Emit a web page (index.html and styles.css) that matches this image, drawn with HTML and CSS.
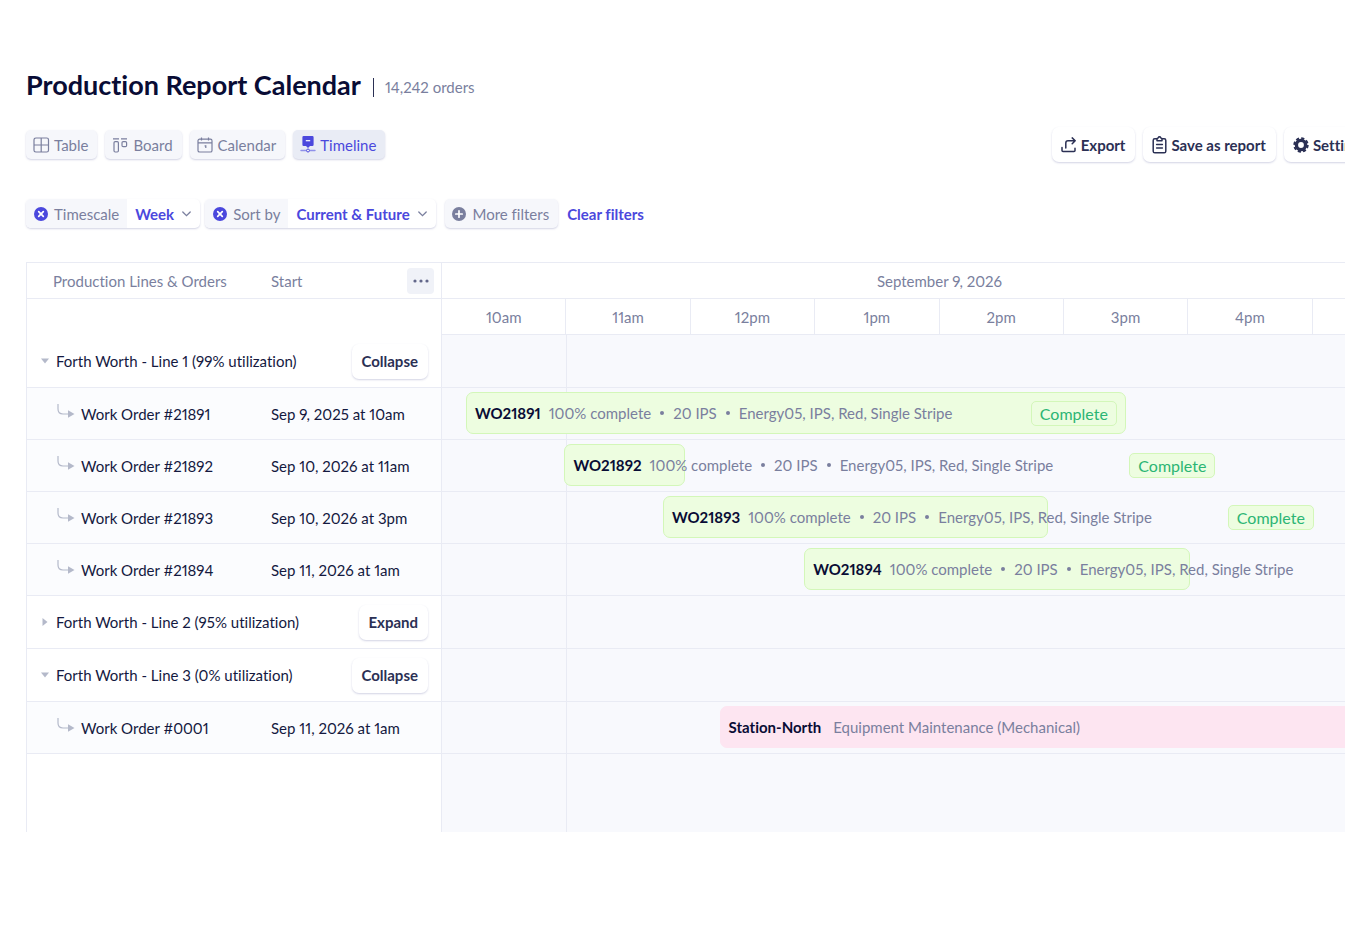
FILE: index.html
```html
<!DOCTYPE html>
<html lang="en">
<head>
  <meta charset="UTF-8">
  <meta name="viewport" content="width=device-width, initial-scale=1.0">
  <title>Production Report Calendar</title>
  <link rel="stylesheet" href="styles.css">
</head>
<body>
  <main class="page">
    <header class="page-header">
      <h1>Production Report Calendar</h1>
      <span class="divider"></span>
      <span class="count">14,242 orders</span>
    </header>

    <div class="toolbar">
      <nav class="views">
        <button class="chip">
          <svg width="17" height="16" viewBox="0 0 17 16" fill="none" stroke="currentColor" stroke-width="1.2"><rect x="1" y="1" width="14.5" height="14" rx="1.8"/><path d="M8.2 1v14M1 8h14.5"/></svg>
          Table
        </button>
        <button class="chip">
          <svg width="17" height="16" viewBox="0 0 17 16" fill="none" stroke="currentColor" stroke-width="1.2"><path d="M1 1.8h6M9 1.8h6"/><rect x="2" y="4.6" width="4.4" height="10.4" rx="1.2"/><rect x="10" y="4.6" width="4.6" height="5" rx="1.2"/></svg>
          Board
        </button>
        <button class="chip">
          <svg width="17" height="16" viewBox="0 0 17 16" fill="none" stroke="currentColor" stroke-width="1.2"><rect x="1" y="2.2" width="14" height="12.8" rx="1.6"/><path d="M1 5.8h14M4.5.4v3.2M11.5.4v3.2M7.6 8.8h1.2v2.2"/></svg>
          Calendar
        </button>
        <button class="chip active">
          <svg width="16" height="17" viewBox="0 0 16 17"><path fill="currentColor" d="M3.6 0h8.8q1.2 0 1.2 1.2v7.6q0 1.2-1.2 1.2H10l-2 2-2-2H3.6q-1.2 0-1.2-1.2V1.2Q2.4 0 3.6 0z"/><path d="M5.8 4.7h4.4" stroke="#fff" stroke-width="1.2"/><path d="M1 14.5h4.6M10.4 14.5H15" stroke="#8f90ea" stroke-width="1.4" stroke-linecap="round"/><circle cx="8" cy="14.5" r="1.5" fill="none" stroke="currentColor"/></svg>
          Timeline
        </button>
      </nav>
      <div class="actions">
        <button class="btn">
          <svg width="16" height="16" viewBox="0 0 16 16" fill="none" stroke="currentColor" stroke-width="1.5" stroke-linecap="round" stroke-linejoin="round"><path d="M1 10.5v3q0 1 1 1h11q1 0 1-1v-2.2M4.8 11V6q0-2.2 2.2-2.2h7.2M11.2.9l3 2.9-3 2.9"/></svg>
          Export
        </button>
        <button class="btn">
          <svg width="15" height="18" viewBox="0 0 15 18" fill="none" stroke="currentColor" stroke-width="1.5" stroke-linecap="round" stroke-linejoin="round"><path d="M4.5 2.8H2.8q-1.6 0-1.6 1.6v10.8q0 1.6 1.6 1.6h9.4q1.6 0 1.6-1.6V4.4q0-1.6-1.6-1.6h-1.7"/><path d="M5 2.5q1.2 0 1.3-.8.3-.9 1.2-.9t1.2.9q.1.8 1.3.8v2.2H5zM4.6 8.6h5.8M4.6 12h5.8"/></svg>
          Save as report
        </button>
        <button class="btn">
          <svg width="16" height="16" viewBox="0 0 16 16" fill="none" stroke="currentColor"><circle cx="8" cy="8" r="4.6" stroke-width="3.4"/><circle cx="8" cy="8" r="6.7" stroke-width="2" stroke-dasharray="3.16 2.1"/></svg>
          Settings
        </button>
      </div>
    </div>

    <div class="filters">
      <div class="filter">
        <div class="filter-name">
          <button class="remove" aria-label="Remove timescale filter">
            <svg width="14" height="14" viewBox="0 0 14 14"><circle cx="7" cy="7" r="7" fill="currentColor"/><path d="M4.7 4.7l4.6 4.6M9.3 4.7L4.7 9.3" stroke="#fff" stroke-width="1.7" stroke-linecap="round"/></svg>
          </button>
          <label for="timescale">Timescale</label>
        </div>
        <div class="filter-value">
          <select id="timescale" class="short">
            <option>Day</option>
            <option selected>Week</option>
            <option>Month</option>
          </select>
          <svg class="chevron" width="9" height="6" viewBox="0 0 9 6" fill="none" stroke="currentColor" stroke-width="1.3" stroke-linecap="round"><path d="M.8 1l3.7 3.7L8.2 1"/></svg>
        </div>
      </div>
      <div class="filter">
        <div class="filter-name">
          <button class="remove" aria-label="Remove sort">
            <svg width="14" height="14" viewBox="0 0 14 14"><circle cx="7" cy="7" r="7" fill="currentColor"/><path d="M4.7 4.7l4.6 4.6M9.3 4.7L4.7 9.3" stroke="#fff" stroke-width="1.7" stroke-linecap="round"/></svg>
          </button>
          <label for="sort">Sort by</label>
        </div>
        <div class="filter-value">
          <select id="sort" class="long">
            <option selected>Current &amp; Future</option>
            <option>Past</option>
          </select>
          <svg class="chevron" width="9" height="6" viewBox="0 0 9 6" fill="none" stroke="currentColor" stroke-width="1.3" stroke-linecap="round"><path d="M.8 1l3.7 3.7L8.2 1"/></svg>
        </div>
      </div>
      <button class="chip more">
        <svg width="14" height="14" viewBox="0 0 14 14"><circle cx="7" cy="7" r="7" fill="currentColor"/><path d="M7 3.8v6.4M3.8 7h6.4" stroke="#fff" stroke-width="1.7" stroke-linecap="round"/></svg>
        More filters
      </button>
      <a class="clear" href="#">Clear filters</a>
    </div>

    <section class="schedule">
      <table class="lines">
        <thead>
          <tr>
            <th class="name">Production Lines &amp; Orders</th>
            <th>
              <div class="split">
                Start
                <button class="menu" aria-label="Columns">
                  <svg width="16" height="4" viewBox="0 0 16 4" fill="currentColor"><circle cx="2" cy="2" r="1.6"/><circle cx="8" cy="2" r="1.6"/><circle cx="14" cy="2" r="1.6"/></svg>
                </button>
              </div>
            </th>
          </tr>
        </thead>
        <tbody>
          <tr class="spacer"><td colspan="2"></td></tr>
          <tr class="group">
            <td colspan="2">
              <div class="split">
                <svg width="8" height="8" viewBox="0 0 8 8"><path fill="currentColor" d="M0 1.5h8L4 6.5z"/></svg>
                <span>Forth Worth - Line 1 (99% utilization)</span>
                <button class="btn">Collapse</button>
              </div>
            </td>
          </tr>
          <tr class="order">
            <td><div class="order-name"><svg width="18" height="24" viewBox="0 0 18 24"><path d="M1 2v5q0 5 5 5h6" fill="none" stroke="currentColor" stroke-width="1.2"/><path fill="currentColor" d="M11 8.2l6.5 3.8-6.5 3.8z"/></svg>Work Order #21891</div></td>
            <td>Sep 9, 2025 at 10am</td>
          </tr>
          <tr class="order">
            <td><div class="order-name"><svg width="18" height="24" viewBox="0 0 18 24"><path d="M1 2v5q0 5 5 5h6" fill="none" stroke="currentColor" stroke-width="1.2"/><path fill="currentColor" d="M11 8.2l6.5 3.8-6.5 3.8z"/></svg>Work Order #21892</div></td>
            <td>Sep 10, 2026 at 11am</td>
          </tr>
          <tr class="order">
            <td><div class="order-name"><svg width="18" height="24" viewBox="0 0 18 24"><path d="M1 2v5q0 5 5 5h6" fill="none" stroke="currentColor" stroke-width="1.2"/><path fill="currentColor" d="M11 8.2l6.5 3.8-6.5 3.8z"/></svg>Work Order #21893</div></td>
            <td>Sep 10, 2026 at 3pm</td>
          </tr>
          <tr class="order">
            <td><div class="order-name"><svg width="18" height="24" viewBox="0 0 18 24"><path d="M1 2v5q0 5 5 5h6" fill="none" stroke="currentColor" stroke-width="1.2"/><path fill="currentColor" d="M11 8.2l6.5 3.8-6.5 3.8z"/></svg>Work Order #21894</div></td>
            <td>Sep 11, 2026 at 1am</td>
          </tr>
          <tr class="group">
            <td colspan="2">
              <div class="split">
                <svg width="8" height="8" viewBox="0 0 8 8"><path fill="currentColor" d="M1.5 0v8l5-4z"/></svg>
                <span>Forth Worth - Line 2 (95% utilization)</span>
                <button class="btn">Expand</button>
              </div>
            </td>
          </tr>
          <tr class="group">
            <td colspan="2">
              <div class="split">
                <svg width="8" height="8" viewBox="0 0 8 8"><path fill="currentColor" d="M0 1.5h8L4 6.5z"/></svg>
                <span>Forth Worth - Line 3 (0% utilization)</span>
                <button class="btn">Collapse</button>
              </div>
            </td>
          </tr>
          <tr class="order">
            <td><div class="order-name"><svg width="18" height="24" viewBox="0 0 18 24"><path d="M1 2v5q0 5 5 5h6" fill="none" stroke="currentColor" stroke-width="1.2"/><path fill="currentColor" d="M11 8.2l6.5 3.8-6.5 3.8z"/></svg>Work Order #0001</div></td>
            <td>Sep 11, 2026 at 1am</td>
          </tr>
        </tbody>
      </table>

      <div class="timeline">
        <div class="track">
          <div class="date">September 9, 2026</div>
          <div class="hours">
            <span>10am</span><span>11am</span><span>12pm</span><span>1pm</span><span>2pm</span><span>3pm</span><span>4pm</span><span></span>
          </div>
          <div class="rows">
            <div class="row group"></div>
            <div class="row">
              <div class="bar" style="margin-left: 2.4%; width: 66.3%">
                <div class="bar-text"><strong>WO21891</strong><span>100% complete</span><i></i><span>20 IPS</span><i></i><span>Energy05, IPS, Red, Single Stripe</span><em class="tag">Complete</em></div>
              </div>
            </div>
            <div class="row">
              <div class="bar" style="margin-left: 12.3%; width: 12.1%">
                <div class="bar-text"><strong>WO21892</strong><span>100% complete</span><i></i><span>20 IPS</span><i></i><span>Energy05, IPS, Red, Single Stripe</span><em class="tag">Complete</em></div>
              </div>
            </div>
            <div class="row">
              <div class="bar" style="margin-left: 22.2%; width: 38.7%">
                <div class="bar-text"><strong>WO21893</strong><span>100% complete</span><i></i><span>20 IPS</span><i></i><span>Energy05, IPS, Red, Single Stripe</span><em class="tag">Complete</em></div>
              </div>
            </div>
            <div class="row">
              <div class="bar" style="margin-left: 36.4%; width: 38.8%">
                <div class="bar-text"><strong>WO21894</strong><span>100% complete</span><i></i><span>20 IPS</span><i></i><span>Energy05, IPS, Red, Single Stripe</span></div>
              </div>
            </div>
            <div class="row group"></div>
            <div class="row group"></div>
            <div class="row">
              <div class="bar maintenance" style="margin-left: 27.9%; width: 72.1%">
                <div class="bar-text"><strong>Station-North</strong><span>Equipment Maintenance (Mechanical)</span></div>
              </div>
            </div>
          </div>
        </div>
      </div>
    </section>
  </main>
</body>
</html>
```
FILE: styles.css
```css
:root {
  --ink: #090c35;
  --text: #14193f;
  --button: #2b3054;
  --muted: #7a7f9e;
  --accent: #4b48dd;
  --line: #e9ebf4;
  --chip: #f6f7fb;
  --shadow: 0 1px 2px rgba(80, 86, 150, 0.26);
}

* {
  box-sizing: border-box;
}

body {
  margin: 0;
  background: #fff;
  color: var(--text);
  font-family: Lato, sans-serif;
  font-size: 15px;
  font-variant-ligatures: none;
  font-variant-numeric: proportional-nums;
}

button, select {
  font: inherit;
  color: inherit;
  border: 0;
  background: none;
  padding: 0;
  cursor: pointer;
  white-space: nowrap;
}

svg {
  flex: none;
}

.page {
  padding: 64px 0 0 26px;
  overflow: hidden;
}

.page-header {
  display: flex;
  align-items: center;
  height: 40px;
}

h1 {
  margin: 0;
  font-size: 27px;
  font-weight: 700;
  color: var(--ink);
}

.divider {
  width: 1px;
  height: 19px;
  margin: 6px 11px 0 12px;
  background: var(--button);
}

.count {
  margin-top: 6px;
  color: var(--muted);
}

.toolbar {
  display: flex;
  justify-content: space-between;
  align-items: center;
  margin: 23px -34px 0 0;
}

.views, .actions {
  display: flex;
  align-items: center;
  gap: 8px;
}

.chip {
  display: flex;
  align-items: center;
  gap: 4px;
  height: 29px;
  padding: 0 9px 0 7px;
  border-radius: 5px;
  background: var(--chip);
  color: var(--muted);
  box-shadow: var(--shadow);
}

.chip.active {
  background: #e9ecf5;
  color: var(--accent);
}

.btn {
  display: flex;
  align-items: center;
  gap: 4px;
  height: 35px;
  padding: 0 10px 0 9px;
  border-radius: 7px;
  background: #fff;
  color: var(--button);
  font-weight: 700;
  box-shadow: var(--shadow);
}

.actions {
  margin-right: 2px;
}

.filters {
  display: flex;
  align-items: center;
  gap: 5px;
  margin-top: 37px;
}

.filter {
  display: flex;
  height: 29px;
  border-radius: 5px;
  box-shadow: var(--shadow);
}

.filter-name {
  display: flex;
  align-items: center;
  gap: 6px;
  padding: 0 8px;
  border-radius: 5px 0 0 5px;
  background: var(--chip);
  color: var(--muted);
}

.remove {
  display: flex;
  color: var(--accent);
}

.filter-value {
  display: grid;
  align-items: center;
  color: var(--accent);
}

.filter-value select {
  grid-area: 1 / 1;
  padding: 0 24px 0 8px;
  font-weight: 700;
  appearance: none;
}

.short {
  width: 73px;
}

.long {
  width: 148px;
}

.chevron {
  grid-area: 1 / 1;
  justify-self: end;
  margin-right: 9px;
  color: var(--muted);
  pointer-events: none;
}

.more {
  gap: 6px;
  margin: 0 4px;
}

.clear {
  color: var(--accent);
  font-weight: 700;
  text-decoration: none;
}

.schedule {
  display: flex;
  margin-top: 34px;
  border: solid var(--line);
  border-width: 1px 0 0 1px;
}

.lines {
  flex: none;
  width: 414px;
  align-self: flex-start;
  border-spacing: 0;
  table-layout: fixed;
}

.lines th {
  height: 36px;
  padding: 0 7px 0 0;
  border-bottom: 1px solid var(--line);
  font-weight: 400;
  text-align: left;
  color: var(--muted);
}

.lines th.name {
  width: 244px;
  padding-left: 26px;
}

.lines td {
  height: 52px;
  padding: 0;
  border-bottom: 1px solid var(--line);
}

.lines .spacer td {
  height: 36px;
  border: 0;
}

.lines .group td {
  height: 53px;
  padding: 0 13px 0 14px;
}

.order {
  background: #fbfcfe;
}

.order-name {
  display: flex;
  align-items: center;
  gap: 6px;
  padding-left: 30px;
}

.order svg, .split svg {
  color: #b4b9ca;
}

.split {
  display: flex;
  align-items: center;
  justify-content: space-between;
}

.split span {
  flex: 1;
  margin-left: 7px;
}

.menu {
  display: flex;
  align-items: center;
  justify-content: center;
  width: 27px;
  height: 26px;
  border-radius: 4px;
  background: #f0f2f8;
}

.split .menu svg {
  color: #62678a;
}

.timeline {
  flex: 1;
  min-width: 0;
  overflow: hidden;
  border-left: 1px solid var(--line);
}

.track {
  min-width: 995px;
}

.date {
  height: 36px;
  line-height: 36px;
  border-bottom: 1px solid var(--line);
  text-align: center;
  color: var(--muted);
}

.hours {
  display: grid;
  grid-template-columns: repeat(8, 1fr);
  height: 36px;
  line-height: 36px;
  border-bottom: 1px solid var(--line);
  text-align: center;
  color: var(--muted);
}

.hours span {
  border-right: 1px solid var(--line);
}

/* the current hour keeps its line down through every row */
.rows {
  padding-bottom: 78px;
  background: linear-gradient(var(--line), var(--line)) 124px 0 / 1px 100% no-repeat #f8f9fd;
}

.row {
  height: 52px;
  padding-top: 4px;
  border-bottom: 1px solid var(--line);
}

.row.group {
  height: 53px;
}

.bar {
  height: 42px;
  border: 1px solid #d3f7b9;
  border-radius: 7px;
  background: #edfde0;
}

.bar-text {
  display: flex;
  align-items: center;
  width: 658px;
  height: 100%;
  padding: 0 8px;
  color: var(--muted);
  white-space: nowrap;
}

.bar strong {
  margin-right: 8px;
  font-weight: 700;
  color: var(--ink);
}

.bar i {
  width: 4px;
  height: 4px;
  margin: 0 9px;
  border-radius: 50%;
  background: var(--muted);
}

.tag {
  margin-left: auto;
  padding: 0 8px;
  font-size: 16px;
  line-height: 23px;
  border: 1px solid #d3f7b9;
  border-radius: 5px;
  background: #edfde0;
  color: #2bb574;
  font-style: normal;
}

.maintenance {
  border-color: #fde5f1;
  background: #fde5f1;
}

.maintenance strong {
  margin-right: 12px;
}
```
